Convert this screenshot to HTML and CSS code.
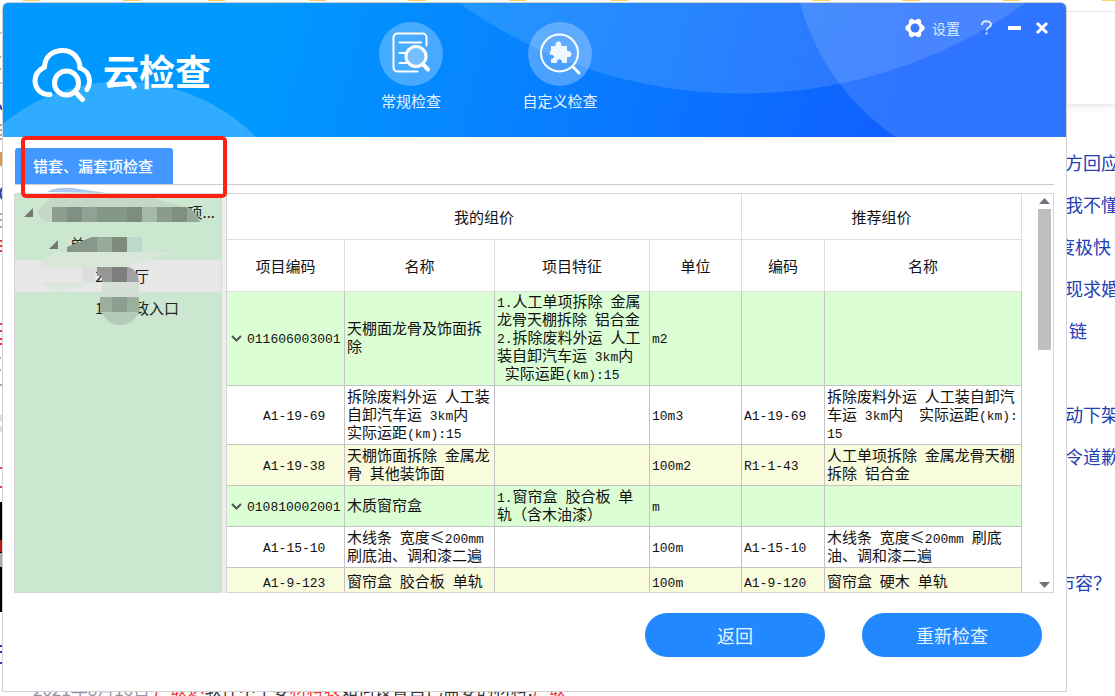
FILE: index.html
```html
<!DOCTYPE html>
<html lang="zh-CN">
<head>
<meta charset="utf-8">
<title>云检查</title>
<link rel="stylesheet" href="styles.css">
</head>
<body>
<div class="backdrop">
  <div class="site-bar">
    <svg class="folders" width="1115" height="2" aria-hidden="true"><path d="M23 0h17M123 0h17M208 0h17M309 0h17M408 0h18M509 0h17M611 0h17M812 0h18M902 0h18M1003 0h17M1102 0h13" stroke="#ffd060" stroke-width="2"/></svg>
  </div>
  <svg class="edge" width="3" height="696" aria-hidden="true">
    <path d="M0 33h3M0 83h3" stroke="#c4cad6" stroke-width="2"/>
    <path d="M0 57h1M0 69h1M0 125h2M0 130h2M0 135h2M0 139h2M0 214h2M0 220h2M0 227h2M0 358h1M0 370h1M0 385h2" stroke="#555" stroke-width="1"/>
    <path d="M0 105l2 5M2 188q-3 5 0 11M0 646h2M0 652h2M0 663h2" stroke="#2440b3" stroke-width="2" fill="none"/>
    <path d="M0 152h2v14h-2z" fill="#d69a4a"/>
    <path d="M0 241h2M0 246h2M0 251h2M0 324h2M0 331h2M0 339h2M0 344h2M0 468h2M0 487h2" stroke="#f0353a" stroke-width="2"/>
    <path d="M0 415h3v6H0zM0 426h3v6H0z" fill="#ddd"/>
    <path d="M0 502h2v110H0z"/><path d="M0 540h2v12H0z" fill="#b51a1a"/><path d="M0 553h2v14H0z" fill="#aaa"/>
  </svg>
  <ul class="hot-list">
    <li><a href="#">方回应</a></li>
    <li><a href="#">我不懂</a></li>
    <li class="cut"><a href="#">度极快</a></li>
    <li><a href="#">现求婚</a></li>
    <li class="tail"><a href="#">链</a></li>
    <li></li>
    <li><a href="#">动下架</a></li>
    <li><a href="#">令道歉</a></li>
    <li></li>
    <li></li>
    <li class="cut"><a href="#">市容？</a></li>
  </ul>
  <p class="snippet"><span class="date">2021年8月16日</span> <em>广联达</em>软件中主要<em>材料表</em>如何设置自己需要的材料,<em>广联</em></p>
</div>

<main class="dialog">
  <header class="banner">
    <div class="brand">
      <svg width="62" height="56" viewBox="31 47 62 56" fill="none" stroke="#fff" stroke-width="5" stroke-linecap="round" aria-hidden="true">
        <path d="M50 94.500C41 95 35 88.500 35 80.500C35 74 39 70 44.500 67C45 56 53 50.500 62.500 50.500C72 50.500 79.500 57 80 68C86 70 89.500 75 89.500 81C89.500 84 88.500 87 87 89.500"/>
        <circle cx="66.500" cy="83" r="12"/><path d="M75.500 92l7 7.500"/>
      </svg>
      <h1>云检查</h1>
    </div>
    <nav class="modes">
      <button type="button" class="mode">
        <svg width="64" height="64" viewBox="0 0 64 64" fill="none" stroke="#fff" stroke-width="2" stroke-linecap="round" aria-hidden="true">
          <circle cx="32" cy="32" r="32" fill="#fff" fill-opacity=".27" stroke="none"/>
          <path d="M47.500 23.500V15.500a4 4 0 0 0-4-4H18.500a4 4 0 0 0-4 4v30a4 4 0 0 0 4 4H38.500"/>
          <path d="M20.500 20.500H42M20.500 31h6M20.500 41h8"/>
          <circle cx="37" cy="34.500" r="10" fill="#fff" fill-opacity=".25" stroke-width="3"/>
          <path d="M45 43.500l4 4" stroke-width="4"/>
        </svg>
        <span>常规检查</span>
      </button>
      <button type="button" class="mode">
        <svg width="64" height="64" viewBox="0 0 64 64" fill="none" stroke="#fff" stroke-width="2" stroke-linecap="round" aria-hidden="true">
          <circle cx="32" cy="32" r="32" fill="#fff" fill-opacity=".27" stroke="none"/>
          <circle cx="31.500" cy="31" r="18.500"/>
          <path d="M45.500 45.500l5.500 5.500" stroke-width="3"/>
          <path d="M23 24h5c-2-6 7-6 5 0h6v5c6-1 6 7 0 6v6h-5c1-5-6-5-5 0h-6v-4c4 0 4-5-1-4v-4h1z" fill="#fff" fill-opacity=".9" stroke="none"/>
        </svg>
        <span>自定义检查</span>
      </button>
    </nav>
    <div class="window-tools">
      <button type="button" class="settings">
        <svg width="20" height="20" viewBox="-10 -10 20 20" aria-hidden="true">
          <path d="M-3-9.500L-1-8h2L3-9.500L6-8v3l1 1.500L9.500-1.500v3L7 3.500L6 5v3L3 9.500L1 8h-2L-3 9.500L-6 8V5L-7 3.500L-9.500 1.500v-3L-7-3.500L-6-5v-3z" fill="#fff"/>
          <circle r="4.500" fill="#427aff"/>
        </svg>
        <span>设置</span>
      </button>
      <button type="button" class="help" aria-label="帮助"><svg width="14" height="16" viewBox="0 0 14 16" fill="none" stroke="#dfe9ff" stroke-width="2" aria-hidden="true"><path d="M3 5c0-5 9-5 9-.5C12 7.500 7.500 7 7.500 10.500M7.500 12.500v2"/></svg></button>
      <button type="button" aria-label="最小化"><svg width="14" height="14" aria-hidden="true"><path d="M1 7h13" stroke="#fff" stroke-width="4"/></svg></button>
      <button type="button" aria-label="关闭"><svg width="14" height="14" fill="none" stroke="#fff" stroke-width="3" aria-hidden="true"><path d="M2 2l10 10M12 2L2 12"/></svg></button>
    </div>
  </header>

  <div class="tabs"><button type="button" class="tab">错套、漏套项检查</button></div>
  <div class="callout"></div>

  <section class="workspace">
    <aside class="tree">
      <ul>
        <li class="lv1"><svg class="fold" width="9" height="9" aria-hidden="true"><path d="M9 0v9H0z"/></svg><span class="end">项...</span></li>
        <li class="lv2"><svg class="fold" width="9" height="9" aria-hidden="true"><path d="M9 0v9H0z"/></svg><span>单</span></li>
        <li class="leaf selected"><span class="num">2</span><span>厅</span></li>
        <li class="leaf"><span class="num">1</span><span>政入口</span></li>
      </ul>
      <svg class="mask" width="208" height="140" viewBox="14 187 208 140" aria-hidden="true">
        <path d="M47 192q8-5 25-4l35 5z" fill="#a9c9f0"/>
        <path d="M42 207q-5 1-3 8 3 7 8 7h153q-8-16-33-20-30-9-60-9H53z" fill="#c4d8c7"/>
        <path d="M52 207h15v15H52z" fill="#8d9f8c"/><path d="M67 207h15v15H67z" fill="#7f8f83"/><path d="M82 207h15v15H82z" fill="#8fa294"/><path d="M97 207h30v15H97z" fill="#84988a"/><path d="M127 207h15v15h-15z" fill="#7d8d80"/><path d="M142 207h15v15h-15z" fill="#a4b9a7"/><path d="M157 207h15v15h-15z" fill="#8b9c8c"/><path d="M172 207h15v15h-15z" fill="#7f9081"/><path d="M187 207q9 4 13 15h-13z" fill="#95a897"/>
        <path d="M67 247l25-10h5v15H67z" fill="#87988a"/><path d="M97 237h15v15H97z" fill="#96aa9c"/><path d="M112 237h15v15h-15z" fill="#7e8c7b"/><path d="M127 237h15v15h-15z" fill="#bcd9c9"/>
        <path d="M39 267q5-11 21-15h112l-45 15z" fill="#d8e7da"/>
        <path d="M42 282h54q-28 9-38 9-13-3-16-9z" fill="#dbe6dc"/>
        <path d="M82 267h15l-3 15H82z" fill="#dedcdc"/><path d="M97 267h15v15h-10v-6h-5z" fill="#969696"/><path d="M112 267h15v15h-15z" fill="#7d7f7e"/><path d="M127 267q10 1 12 15h-12z" fill="#a4a3a4"/>
        <path d="M102 282h37v15h-37z" fill="#d5dfd6"/><path d="M100 297h12v15h-12z" fill="#9caf9e"/><path d="M112 297h15v15h-15z" fill="#8b9f91"/><path d="M127 297h12v15h-12z" fill="#9cae9c"/><path d="M102 312h37q-6 13-19 13t-18-13z" fill="#b3cbb8"/>
      </svg>
    </aside>
    <div class="grid">
      <div class="grid-view">
        <table>
          <colgroup><col class="c-code"><col class="c-name"><col class="c-feat"><col class="c-unit"><col class="c-code2"><col></colgroup>
          <thead>
            <tr class="h1"><th colspan="4">我的组价</th><th colspan="2">推荐组价</th></tr>
            <tr class="h2"><th>项目编码</th><th>名称</th><th>项目特征</th><th>单位</th><th>编码</th><th>名称</th></tr>
          </thead>
          <tbody>
            <tr class="group tall">
              <td class="parent"><svg class="chev" width="13" height="9" aria-hidden="true"><path d="M2 2l4.500 4.500L11 2"/></svg><span class="n">011606003001</span></td>
              <td>天棚面龙骨及饰面拆<br>除</td>
              <td><span class="n">1.</span>人工单项拆除<span class="n"> </span>金属<br>龙骨天棚拆除<span class="n"> </span>铝合金<br><span class="n">2.</span>拆除废料外运<span class="n"> </span>人工<br>装自卸汽车运<span class="n"> 3km</span>内<br><span class="n"> </span>实际运距<span class="n">(km):15</span></td>
              <td><span class="n">m2</span></td><td></td><td></td>
            </tr>
            <tr class="mid">
              <td class="child"><span class="n">A1-19-69</span></td>
              <td>拆除废料外运<span class="n"> </span>人工装<br>自卸汽车运<span class="n"> 3km</span>内<br>实际运距<span class="n">(km):15</span></td>
              <td></td><td><span class="n">10m3</span></td><td><span class="n">A1-19-69</span></td>
              <td>拆除废料外运<span class="n"> </span>人工装自卸汽<br>车运<span class="n"> 3km</span>内<span class="n">  </span>实际运距<span class="n">(km):</span><br><span class="n">15</span></td>
            </tr>
            <tr class="alt">
              <td class="child"><span class="n">A1-19-38</span></td>
              <td>天棚饰面拆除<span class="n"> </span>金属龙<br>骨<span class="n"> </span>其他装饰面</td>
              <td></td><td><span class="n">100m2</span></td><td><span class="n">R1-1-43</span></td>
              <td>人工单项拆除<span class="n"> </span>金属龙骨天棚<br>拆除<span class="n"> </span>铝合金</td>
            </tr>
            <tr class="group">
              <td class="parent"><svg class="chev" width="13" height="9" aria-hidden="true"><path d="M2 2l4.500 4.500L11 2"/></svg><span class="n">010810002001</span></td>
              <td>木质窗帘盒</td>
              <td><span class="n">1.</span>窗帘盒<span class="n"> </span>胶合板<span class="n"> </span>单<br>轨（含木油漆）</td>
              <td><span class="n">m</span></td><td></td><td></td>
            </tr>
            <tr>
              <td class="child"><span class="n">A1-15-10</span></td>
              <td>木线条<span class="n"> </span>宽度≤<span class="n">200mm</span><br>刷底油、调和漆二遍</td>
              <td></td><td><span class="n">100m</span></td><td><span class="n">A1-15-10</span></td>
              <td>木线条<span class="n"> </span>宽度≤<span class="n">200mm </span>刷底<br>油、调和漆二遍</td>
            </tr>
            <tr class="alt last">
              <td class="child"><span class="n">A1-9-123</span></td>
              <td>窗帘盒<span class="n"> </span>胶合板<span class="n"> </span>单轨</td>
              <td></td><td><span class="n">100m</span></td><td><span class="n">A1-9-120</span></td>
              <td>窗帘盒<span class="n"> </span>硬木<span class="n"> </span>单轨</td>
            </tr>
          </tbody>
        </table>
      </div>
      <div class="scroller">
        <svg width="11" height="6" aria-hidden="true"><path d="M0 6L5.500 0L11 6z"/></svg>
        <div class="track"><div class="thumb"></div></div>
        <svg width="11" height="6" aria-hidden="true"><path d="M0 0L5.500 6L11 0z"/></svg>
      </div>
    </div>
  </section>

  <footer class="actions">
    <button type="button">返回</button>
    <button type="button">重新检查</button>
  </footer>
</main>
</body>
</html>
```

FILE: styles.css
```css
* { box-sizing: border-box; }
body {
  margin: 0;
  padding: 3px 49px 4px 3px;
  position: relative;
  min-height: 100vh;
  background: #fff;
  color: #111;
  font: 15px/18px "Noto Sans CJK SC", sans-serif;
}
ul { list-style: none; margin: 0; padding: 0; }
button { border: 0; padding: 0; background: none; color: inherit; font: inherit; cursor: pointer; }
svg { display: block; flex: none; }

/* page behind the dialog */
.backdrop { position: absolute; inset: 0; overflow: hidden; }
.site-bar { height: 104px; background: linear-gradient(#e6e6e6, #e6e6e6) 0 11px / 100% 1px no-repeat; box-shadow: 0 0 8px rgba(0, 0, 0, .18); }
.edge { position: absolute; left: 0; top: 0; }
.hot-list { position: absolute; right: 0; top: 141px; width: 50px; overflow: hidden; }
.hot-list li { height: 42px; line-height: 42px; font-size: 18px; white-space: nowrap; }
.hot-list .cut { text-indent: -8px; }
.hot-list .tail { text-indent: 4px; }
.hot-list a { color: #2440b3; text-decoration: none; }
.snippet { position: absolute; left: 33px; bottom: -2px; margin: 0; color: #333; font-size: 17px; white-space: nowrap; }
.snippet .date { color: #9195a3; }
.snippet em { color: #f73131; font-style: normal; }

/* dialog */
.dialog { position: relative; background: #fff; border-radius: 5px 5px 0 0; box-shadow: 0 0 0 1px #d2d2d4; }
.banner {
  display: flex;
  justify-content: space-between;
  height: 134px;
  border-radius: 5px 5px 0 0;
  color: #fff;
  background:
    radial-gradient(circle at 119px 268px, rgba(255, 255, 255, .19) 189px, transparent 190px),
    radial-gradient(circle at 739px -398px, rgba(255, 255, 255, .12) 488px, transparent 489px),
    radial-gradient(circle at 1027px -63px, rgba(255, 255, 255, .13) 238px, transparent 239px),
    linear-gradient(105deg, #0099ff 24%, #1060ff 84%);
}
.brand { display: flex; gap: 10px; width: 348px; padding: 44px 0 0 28px; }
.brand h1 { margin: 5px 0 0; font-size: 36px; line-height: 36px; font-weight: 700; }
.modes { display: flex; flex: 1; gap: 29px; padding-top: 19px; }
.mode { display: flex; flex-direction: column; align-items: center; gap: 6px; width: 120px; height: 90px; }
.mode span { color: #e8f3ff; }
.window-tools { display: flex; gap: 14px; align-items: center; height: 50px; padding-right: 17px; }
.settings { display: flex; align-items: center; gap: 7px; margin-right: 5px; color: #dfe9ff; font-size: 14px; }

.tabs { display: flex; margin: 11px 12px 0; border-bottom: 1px solid #ccc; }
.tab { height: 36px; padding: 0 20px 0 18px; border-radius: 3px 3px 0 0; background: #4298ff; color: #fff; font-weight: 500; }
.callout { position: absolute; left: 18px; top: 133px; width: 206px; height: 62px; border: 4px solid #ff2113; border-radius: 5px; z-index: 3; }

.workspace { display: flex; gap: 4px; height: calc(100vh - 296px); min-height: 240px; margin: 8px 12px 0 11px; background: #eee; }
.tree { position: relative; width: 208px; padding-top: 2px; border: 1px solid #d8d8d8; background: #cbe7cf; color: #222; }
.tree li { display: flex; align-items: center; height: 32px; padding-left: 80px; }
.tree .lv1 { padding: 0 6px 0 9px; }
.tree .lv2 { padding-left: 34px; gap: 12px; }
.tree .selected { background: #e8e7e8; }
.tree .end { margin-left: auto; }
.tree .num { width: 39px; }
.fold { fill: #777; }
.mask { position: absolute; left: -1px; top: -7px; }

.grid { display: flex; flex: 1; min-width: 0; border: 1px solid #d5d5d5; background: #fff; }
.grid-view { flex: 1; min-width: 0; overflow: hidden; }
table { width: 100%; table-layout: fixed; border-collapse: separate; border-spacing: 0; }
.c-code { width: 118px; }
.c-name { width: 150px; }
.c-feat { width: 155px; }
.c-unit { width: 92px; }
.c-code2 { width: 83px; }
th { padding: 0; font-weight: 400; border: solid #dedede; border-width: 0 1px 1px 0; }
.h1 { height: 46px; }
.h2 { height: 52px; }
td { height: 41px; padding: 0 2px 3px; border: solid #c4c4c4; border-width: 0 1px 1px 0; white-space: nowrap; overflow: hidden; }
.tall td { height: 94px; }
.mid td { height: 59px; }
.last td { height: 30px; }
.group td { background: #dcfed5; }
.alt td { background: #f9fbdd; }
.n { font-family: "Liberation Mono", monospace; font-size: 13px; line-height: 0; white-space: pre; }
.chev { display: inline-block; margin: 0 4px 0 1px; fill: none; stroke: #555; stroke-width: 2; }
td.child { padding-left: 36px; }

.scroller { display: flex; flex-direction: column; align-items: center; gap: 5px; width: 31px; padding: 4px 0 4px 13px; fill: #73737f; }
.track { flex: 1; }
.thumb { width: 13px; height: 141px; background: #bfbfbf; }

.actions { display: flex; justify-content: flex-end; gap: 37px; padding: 20px 24px 34px; }
.actions button { width: 180px; height: 44px; border-radius: 22px; background: #2188ff; color: #e8f3ff; font-size: 18px; }
```
